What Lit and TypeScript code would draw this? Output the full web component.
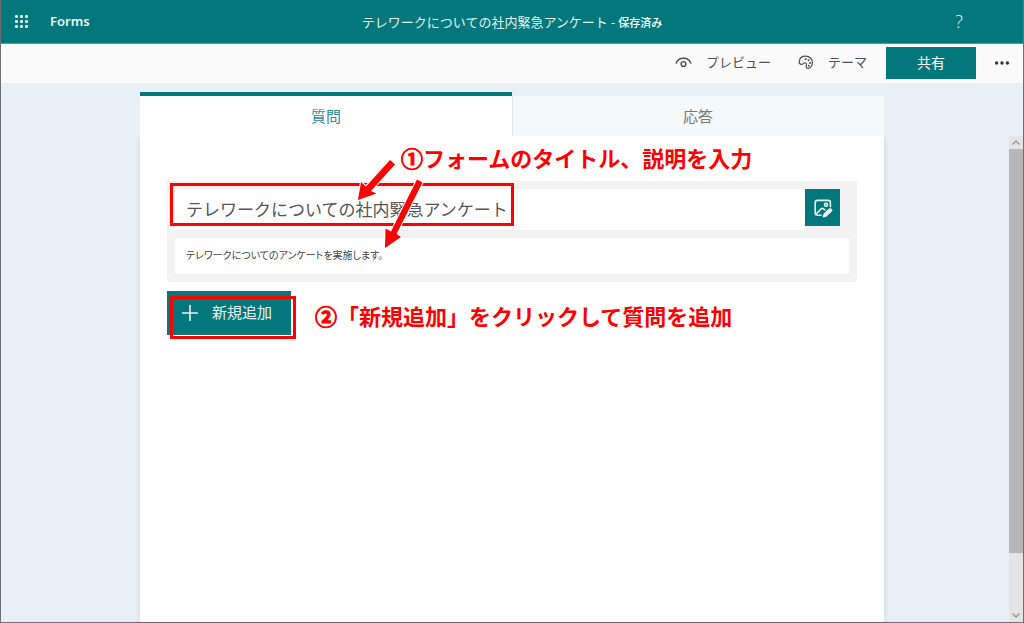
import { LitElement, html, css, svg } from "lit";
import { customElement, property, state } from "lit/decorators.js";
import { classMap } from "lit/directives/class-map.js";

const base = css`
  * {
    box-sizing: border-box;
  }
  button,
  input {
    font: inherit;
    color: inherit;
    margin: 0;
    padding: 0;
    border: 0;
    border-radius: 0;
    background: none;
  }
  button {
    cursor: pointer;
  }
  svg {
    display: block;
    flex: none;
  }
`;

@customElement("suite-header")
class SuiteHeader extends LitElement {
  @property() heading = "";

  static styles = [
    base,
    css`
      :host {
        display: grid;
        grid-template-columns: 1fr auto 1fr;
        align-items: center;
        box-sizing: border-box;
        height: 44px;
        padding: 0 54px 1px 11px;
        background: #03787c;
        border-bottom: 1px solid #4b9fa2;
        color: #fff;
      }
      .brand {
        display: flex;
        align-items: center;
        gap: 20px;
      }
      .app {
        font-family: "Noto Sans", sans-serif;
        font-size: 13px;
        font-weight: 600;
        color: #eef7f7;
      }
      .title {
        font-size: 13px;
        padding-left: 43px;
        color: #e3f1f1;
      }
      .status {
        font-size: 11px;
        font-weight: 500;
        color: #fff;
      }
      .help {
        justify-self: end;
        width: 20px;
        font-family: "Open Sans", sans-serif;
        font-size: 18px;
        font-weight: 300;
        color: #e9f5f5;
      }
    `,
  ];

  render() {
    const dots = [0, 1, 2].flatMap((r) =>
      [0, 1, 2].map(
        (c) => svg`<rect x=${3 + c * 5} y=${3 + r * 5} width="3" height="3" rx="1"/>`
      )
    );
    return html`
      <div class="brand">
        <button aria-label="アプリ起動ツール">
          <svg width="18" height="19" viewBox="0 0 18 19" fill="#dceeee">${dots}</svg>
        </button>
        <span class="app">Forms</span>
      </div>
      <div class="title">
        ${this.heading} - <span class="status">保存済み</span>
      </div>
      <button class="help" aria-label="ヘルプ">?</button>
    `;
  }
}

@customElement("command-bar")
class CommandBar extends LitElement {
  static styles = [
    base,
    css`
      :host {
        display: flex;
        justify-content: flex-end;
        align-items: center;
        box-sizing: border-box;
        height: 39px;
        padding: 0 13px 2px 0;
        background: #fafafa;
        color: #505050;
        font-size: 13px;
      }
      .command {
        display: flex;
        align-items: center;
        gap: 14px;
        margin-right: 27px;
        padding-bottom: 2px;
      }
      .share {
        width: 90px;
        height: 32px;
        margin-left: -8px;
        padding-bottom: 2px;
        background: #03787c;
        color: #fff;
        font-size: 14px;
      }
      .more {
        margin-left: 18px;
      }
    `,
  ];

  render() {
    return html`
      <button class="command">
        <svg width="17" height="16" viewBox="0 0 17 16" fill="none" stroke="#505050" stroke-width="1.4">
          <path d="M1 9.6 C2.2 6 5 4.2 8.5 4.2 S14.8 6 16 9.6" />
          <circle cx="8.5" cy="10" r="2.4" />
        </svg>
        プレビュー
      </button>
      <button class="command">
        <svg width="16" height="16" viewBox="0 0 16 16" fill="none" stroke="#505050" stroke-width="1.2" stroke-linejoin="round">
          <path d="M1.2 7.6 C1.6 4.2 4.4 2.2 7.6 2.2 C11.6 2.2 14.4 5 14.4 8.6 C14.4 12.2 12.2 14.6 10 14.4 C8 14.2 8 12.6 8.4 11 C8.8 9.2 7.6 8.4 6.2 9 C5 9.5 4.4 10.6 3 10.3 C1.6 10 1 9 1.2 7.6 Z" />
          <g fill="#505050" stroke="none">
            <circle cx="7.6" cy="5" r="1" />
            <circle cx="10.6" cy="6.2" r="1" />
            <circle cx="12" cy="9" r="1" />
            <circle cx="10.8" cy="11.8" r="1" />
          </g>
        </svg>
        テーマ
      </button>
      <button class="share">共有</button>
      <button class="more" aria-label="その他">
        <svg width="16" height="6" viewBox="0 0 16 6" fill="#333">
          <circle cx="2.6" cy="3" r="1.7" />
          <circle cx="8" cy="3" r="1.7" />
          <circle cx="13.4" cy="3" r="1.7" />
        </svg>
      </button>
    `;
  }
}

@customElement("form-editor")
class FormEditor extends LitElement {
  @property() heading = "";
  @property() description = "";
  @state() private tab = "questions";

  static styles = [
    base,
    css`
      :host {
        display: flex;
        flex-direction: column;
        padding-top: 9px;
      }
      .tabs {
        display: grid;
        grid-template-columns: 1fr 1fr;
        height: 44px;
      }
      .tab {
        padding-bottom: 2px;
        border-top: 4px solid transparent;
        background: #f4f9f9;
        background-clip: padding-box;
        color: #767676;
        font-size: 15px;
      }
      .tab.selected {
        position: relative;
        border-top-color: #03787c;
        background: #fff;
        background-clip: padding-box;
        box-shadow: 1px 0 0 #dfe8e9;
        color: #2f8c90;
      }
      .sheet {
        position: relative;
        flex: 1;
        padding: 45px 27px 0;
        background: #fff;
        box-shadow: 0 3px 5px rgba(0, 60, 65, 0.16);
      }
      .fields {
        display: grid;
        gap: 8px;
        padding: 8px;
        background: #f2f2f2;
      }
      .row {
        display: flex;
        align-items: flex-start;
        padding-right: 9px;
      }
      .name,
      .description {
        width: 100%;
        min-width: 0;
        padding: 0 0 3px 11px;
        background: #fff;
        color: #555;
      }
      .name {
        flex: 1;
        height: 41px;
        font-size: 17px;
      }
      .description {
        height: 36px;
        color: #444;
        font-size: 10px;
        font-feature-settings: "palt";
      }
      .picture {
        display: grid;
        place-items: center;
        width: 35px;
        height: 37px;
        background: #03787c;
      }
      .add {
        display: flex;
        align-items: center;
        gap: 14px;
        width: 124px;
        height: 44px;
        margin-top: 9px;
        padding-left: 15px;
        background: #03787c;
        color: #e9f5f5;
        font-size: 15px;
      }
      .label {
        padding-bottom: 3px;
      }
      .note {
        position: absolute;
        color: #f00;
        font-size: 22px;
        font-weight: 700;
        line-height: 32px;
        white-space: nowrap;
      }
      .number {
        -webkit-text-stroke: 1px #f00;
      }
      .note-title {
        left: 261px;
        top: 5px;
      }
      .note-add {
        left: 175px;
        top: 163px;
      }
      .frame {
        position: absolute;
        left: 30px;
        border: 3px solid #f00;
        pointer-events: none;
      }
      .frame-title {
        top: 47px;
        width: 344px;
        height: 43px;
      }
      .frame-add {
        top: 160px;
        width: 126px;
        height: 43px;
      }
      .arrows {
        position: absolute;
        left: 210px;
        top: 14px;
        pointer-events: none;
      }
    `,
  ];

  private renderTab(id: string, label: string) {
    const selected = this.tab === id;
    return html`<button
      role="tab"
      aria-selected=${selected ? "true" : "false"}
      class=${classMap({ tab: true, selected })}
      @click=${() => (this.tab = id)}
    >${label}</button>`;
  }

  render() {
    return html`
      <div class="tabs" role="tablist">
        ${this.renderTab("questions", "質問")}${this.renderTab("responses", "応答")}
      </div>
      <section class="sheet">
        <div class="fields">
          <div class="row">
            <input class="name" aria-label="タイトル" .value=${this.heading} />
            <button class="picture" aria-label="画像の挿入">
              <svg width="20" height="20" viewBox="0 0 20 20" fill="none" stroke="#e8f5f5" stroke-width="1.6" stroke-linecap="round" stroke-linejoin="round">
                <path d="M8 17.2 H4.6 Q2.2 17.2 2.2 14.8 V4.8 Q2.2 2.4 4.6 2.4 H15 Q17.4 2.4 17.4 4.8 V8.6" />
                <path d="M3.4 15.8 L8.2 10.8 Q9.4 9.8 10.6 10.8 L12 12" />
                <circle cx="13" cy="6.8" r="1.5" />
                <path d="M10.2 18.6 L11.4 15.4 L16.2 11 Q17.6 10.2 18.6 11.4 Q19.4 12.6 18.2 13.6 L13.4 18 Z" fill="#fff" stroke="#fff" stroke-width="1" />
              </svg>
            </button>
          </div>
          <input class="description" aria-label="説明" .value=${this.description} />
        </div>
        <button class="add">
          <svg width="16" height="16" viewBox="0 0 16 16" fill="none" stroke="#e9f5f5" stroke-width="1.6">
            <path d="M8 0 V16 M0 8 H16" />
          </svg>
          <span class="label">新規追加</span>
        </button>

        <div class="frame frame-title"></div>
        <div class="frame frame-add"></div>
        <div class="note note-title"><span class="number">①</span>フォームのタイトル、説明を入力</div>
        <div class="note note-add"><span class="number">②</span>「新規追加」をクリックして質問を追加</div>
        <svg class="arrows" width="80" height="104" viewBox="0 0 80 104" fill="#f00" stroke="#fff" stroke-width="2" paint-order="stroke">
          <path d="M8 50 L11 32 L16 36.5 L40 10 L45 14.5 L21 41 L26.5 43.5 Z" />
          <path d="M35 98 L35.5 78.5 L41 81.5 L67 29.5 L72.5 32.5 L46.5 84 L51 87 Z" />
        </svg>
      </section>
    `;
  }
}

@customElement("app-root")
class AppRoot extends LitElement {
  private heading = "テレワークについての社内緊急アンケート";
  private description = "テレワークについてのアンケートを実施します。";

  static styles = [
    base,
    css`
      :host {
        display: flex;
        flex-direction: column;
        box-sizing: border-box;
        min-height: 100vh;
        border: 1px solid #6b7072;
        border-top: 0;
        background: #e8f0f3;
        font-family: "Noto Sans CJK JP", sans-serif;
      }
      .body {
        flex: 1;
        display: grid;
        grid-template-columns: 1fr minmax(0, 744px) 1fr;
      }
      .editor {
        grid-column: 2;
      }
      .scrollbar {
        justify-self: end;
        display: flex;
        flex-direction: column;
        justify-content: space-between;
        width: 14px;
        margin-top: 53px;
        background: #e4e4e4;
      }
      .thumb {
        flex: 0 1 404px;
        margin-bottom: auto;
        background: #b7b7b7;
      }
      .arrow {
        margin: 0 2px;
      }
    `,
  ];

  render() {
    return html`
      <suite-header .heading=${this.heading}></suite-header>
      <command-bar></command-bar>
      <main class="body">
        <form-editor class="editor" .heading=${this.heading} .description=${this.description}></form-editor>
        <div class="scrollbar" aria-hidden="true">
          <svg class="arrow" width="10" height="13" viewBox="0 0 10 13" fill="none" stroke="#9a9a9a" stroke-width="1.4"><path d="M1.5 8.5 L5 5 L8.5 8.5" /></svg>
          <div class="thumb"></div>
          <svg class="arrow" width="10" height="13" viewBox="0 0 10 13" fill="none" stroke="#9a9a9a" stroke-width="1.4"><path d="M1.5 4.5 L5 8 L8.5 4.5" /></svg>
        </div>
      </main>
    `;
  }
}
